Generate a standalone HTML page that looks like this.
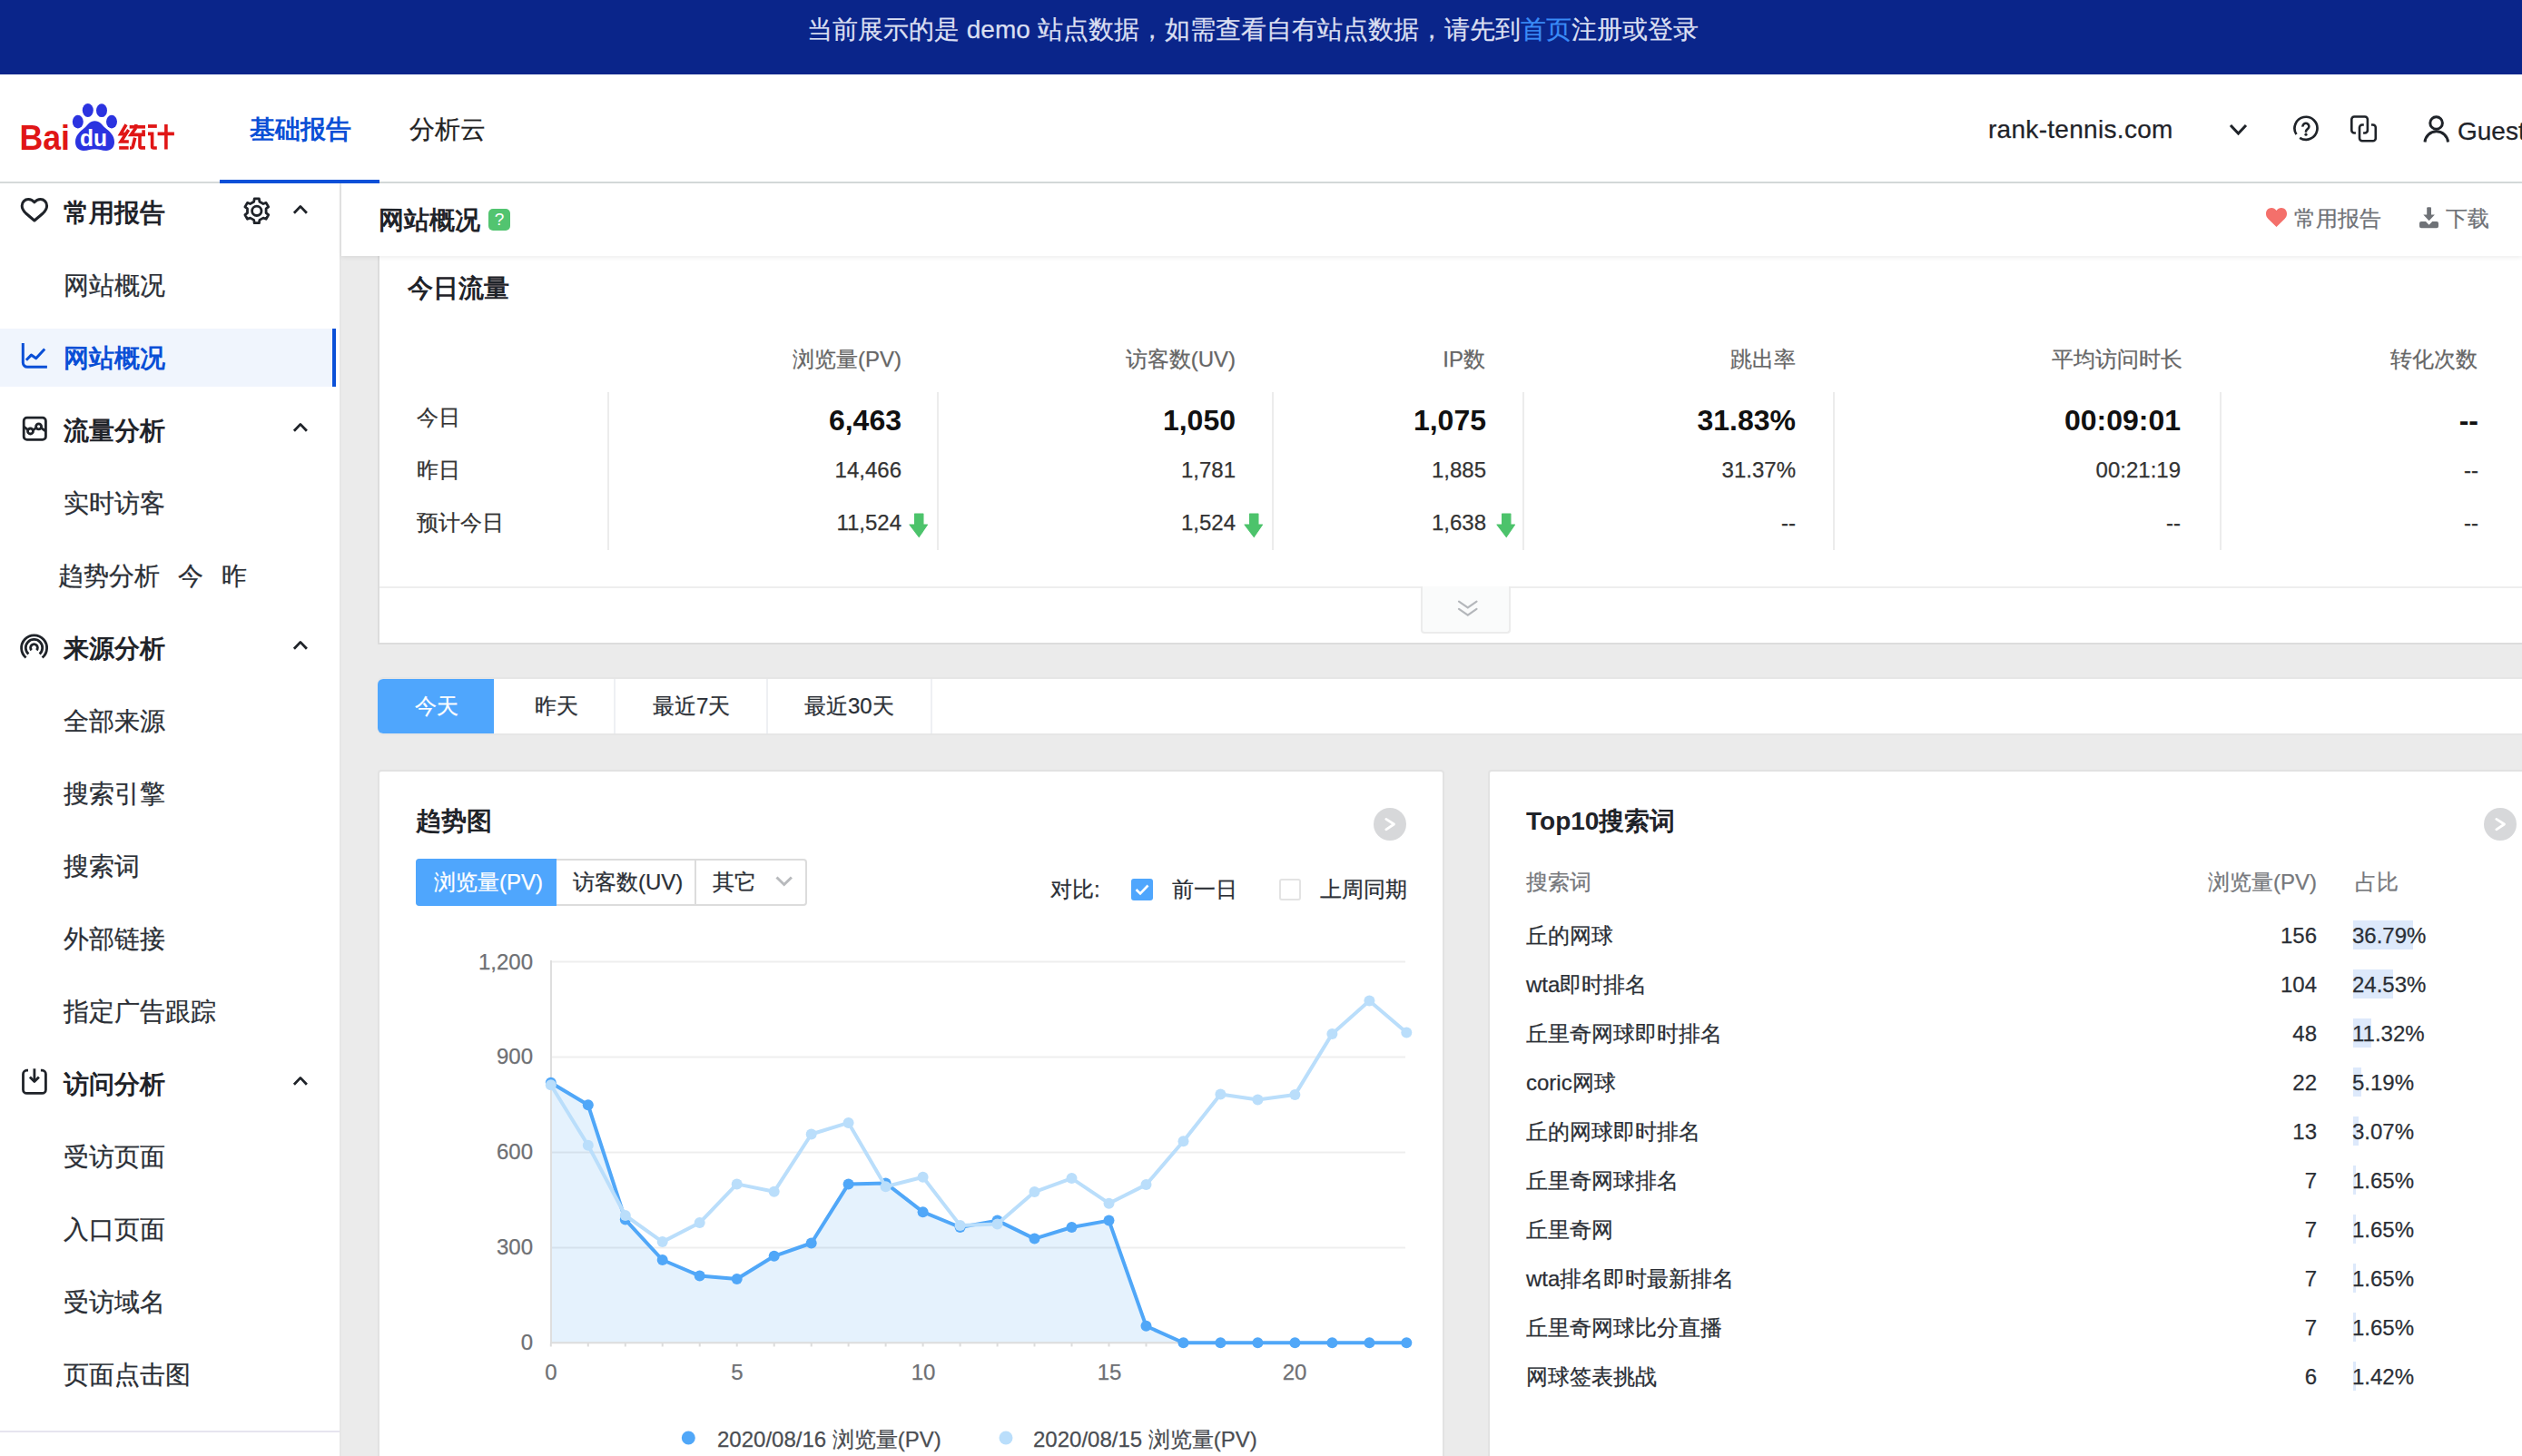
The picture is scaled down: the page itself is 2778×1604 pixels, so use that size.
<!DOCTYPE html>
<html><head><meta charset="utf-8">
<style>
*{margin:0;padding:0;box-sizing:border-box}
html,body{width:2778px;height:1604px;overflow:hidden;background:#ebebeb;font-family:"Liberation Sans",sans-serif;color:#222}
.a{position:absolute}
.t{position:absolute;white-space:nowrap;line-height:1;-webkit-text-stroke:0.25px currentColor}
.t[style*="bold"]{-webkit-text-stroke:0}
#banner{left:0;top:0;width:2778px;height:82px;background:#0a258a}
#header{left:0;top:82px;width:2778px;height:120px;background:#fff;border-bottom:2px solid #d5dada}
#side{left:0;top:202px;width:376px;height:1402px;background:#fff;border-right:2px solid #e6e6e6}
#titlebar{left:376px;top:202px;width:2402px;height:80px;background:#fff;box-shadow:0 2px 5px rgba(0,0,0,0.07);z-index:3}
.card{position:absolute;background:#fff;border:2px solid #e4e4e4}
.sb{font-size:28px;font-weight:bold;color:#2b2f36}
.si{font-size:28px;color:#2b2f36}
.th{font-size:24px;color:#666}
.vd{position:absolute;width:2px;background:#eeeeee;top:431px;height:175px}
</style></head><body>
<div id="banner" class="a"></div>
<div class="t" style="left:889px;top:19px;font-size:28px;color:#dadff1">当前展示的是 demo 站点数据，如需查看自有站点数据，请先到<span style="color:#3a8cf7">首页</span>注册或登录</div>

<div id="header" class="a"></div>
<svg class="a" style="left:0;top:100px" width="210" height="80" viewBox="0 100 210 80">
<text x="21.5" y="164.8" font-family="Liberation Sans" font-weight="bold" font-size="38.5" fill="#e01616" textLength="55.5" lengthAdjust="spacingAndGlyphs">Bai</text>
<g fill="#2b33e0">
<ellipse cx="96.8" cy="121.5" rx="6" ry="7.4"/><ellipse cx="112" cy="121.7" rx="6" ry="7.4"/>
<ellipse cx="85.8" cy="134.1" rx="6" ry="7.3"/><ellipse cx="123" cy="134.1" rx="6" ry="7.3"/>
<path d="M104.4 133.2C99 133.2 96.5 137.5 93.5 140.5C88 145 83 149 83 156.5C83 162.5 87 166 92 166C97 166 100 164.3 104.4 164.3C109 164.3 112 166 117 166C122 166 126 162.5 126 156.5C126 149 121 145 115.5 140.5C112.5 137.5 110 133.2 104.4 133.2Z"/>
</g>
<text x="88" y="161" font-family="Liberation Sans" font-weight="bold" font-size="25" fill="#fff" textLength="30" lengthAdjust="spacingAndGlyphs">du</text>
<g fill="none" stroke="#e01616" stroke-width="3.6" stroke-linejoin="miter" stroke-linecap="butt">
<path d="M139 137.3 L132.8 147.6 H138.2"/>
<path d="M141.6 143 L133.2 156 H141.8"/>
<path d="M131.2 162.9 H141.6"/>
<path d="M142.7 139.8 H160"/>
<path d="M149.8 137 V139"/>
<path d="M149.8 140.8 L144.3 148.4 H160 M158.1 143.2 V149"/>
<path d="M148.7 151.8 L146.3 161.5 Q145.8 163 144 163 H143"/>
<path d="M154 149.8 V161 Q154 162.9 156 162.9 H160"/>
<path d="M163 139 H172.8" stroke-width="3.8"/>
<path d="M163 147.4 H167.6 V161.5 Q167.6 163 169.5 163 H172.8"/>
<path d="M182.9 137.1 V164.6 M173.6 147.4 H191.9"/>
</g>
</svg>
<div class="t" style="left:275px;top:129px;font-size:28px;font-weight:bold;color:#0a4fd6">基础报告</div>
<div class="t" style="left:451px;top:129px;font-size:28px;color:#222">分析云</div>
<div class="a" style="left:242px;top:198px;width:176px;height:4px;background:#0a50d8;z-index:5"></div>
<div class="t" style="left:2190px;top:129px;font-size:28px;letter-spacing:0.3px;color:#1f2329">rank-tennis.com</div>
<svg class="a" style="left:2440px;top:110px" width="338" height="65" viewBox="2440 110 338 65" fill="none" stroke="#1f2329" stroke-width="3">
<path d="M2457 138 L2465.5 147 L2474 138"/>
<path d="M2529.5 148.1 A12.5 12.5 0 1 1 2533.2 151.8" stroke-width="2.7"/>
<path d="M2536.5 139.6 A3.45 3.45 0 1 1 2542.2 141.8 L2540.9 142.9 Q2540 143.8 2540 145 V145.8" stroke-width="2.6"/>
<circle cx="2540" cy="148.2" r="1.6" fill="#1f2329" stroke="none"/>
<path d="M2594.9 146.5 H2593.3 A3 3 0 0 1 2590.3 143.5 V131.5 A3 3 0 0 1 2593.3 128.5 H2604.9 A3 3 0 0 1 2607.9 131.5 V143.5 A3 3 0 0 1 2604.9 146.5 H2603.1" stroke-width="2.6"/>
<path d="M2603.8 137.5 H2602 A3 3 0 0 0 2599 140.5 V152.2 A3 3 0 0 0 2602 155.2 H2613.8 A3 3 0 0 0 2616.8 152.2 V140.5 A3 3 0 0 0 2613.8 137.5 H2612" stroke-width="2.6"/>
<circle cx="2683.6" cy="135.5" r="6.8"/>
<path d="M2671 156.5 A12.8 12.8 0 0 1 2696.5 156.5"/>
</svg>
<div class="t" style="left:2707px;top:131px;font-size:28px;color:#1f2329">Guest</div>
<div id="side" class="a"></div>
<div class="a" style="left:0;top:362px;width:365px;height:64px;background:#f0f5fd"></div>
<div class="a" style="left:366px;top:362px;width:4px;height:64px;background:#0a50d8"></div>
<div class="t" style="left:70px;top:221px;font-size:28px;font-weight:bold;color:#1f2329">常用报告</div>
<div class="t" style="left:70px;top:301px;font-size:28px;font-weight:normal;color:#2b2f36">网站概况</div>
<div class="t" style="left:70px;top:381px;font-size:28px;font-weight:bold;color:#0a4fd6">网站概况</div>
<div class="t" style="left:70px;top:461px;font-size:28px;font-weight:bold;color:#1f2329">流量分析</div>
<div class="t" style="left:70px;top:541px;font-size:28px;font-weight:normal;color:#2b2f36">实时访客</div>
<div class="t" style="left:64px;top:621px;font-size:28px;color:#2b2f36">趋势分析</div><div class="t" style="left:196px;top:621px;font-size:28px;color:#2b2f36">今</div><div class="t" style="left:244px;top:621px;font-size:28px;color:#2b2f36">昨</div>
<div class="t" style="left:70px;top:701px;font-size:28px;font-weight:bold;color:#1f2329">来源分析</div>
<div class="t" style="left:70px;top:781px;font-size:28px;font-weight:normal;color:#2b2f36">全部来源</div>
<div class="t" style="left:70px;top:861px;font-size:28px;font-weight:normal;color:#2b2f36">搜索引擎</div>
<div class="t" style="left:70px;top:941px;font-size:28px;font-weight:normal;color:#2b2f36">搜索词</div>
<div class="t" style="left:70px;top:1021px;font-size:28px;font-weight:normal;color:#2b2f36">外部链接</div>
<div class="t" style="left:70px;top:1101px;font-size:28px;font-weight:normal;color:#2b2f36">指定广告跟踪</div>
<div class="t" style="left:70px;top:1181px;font-size:28px;font-weight:bold;color:#1f2329">访问分析</div>
<div class="t" style="left:70px;top:1261px;font-size:28px;font-weight:normal;color:#2b2f36">受访页面</div>
<div class="t" style="left:70px;top:1341px;font-size:28px;font-weight:normal;color:#2b2f36">入口页面</div>
<div class="t" style="left:70px;top:1421px;font-size:28px;font-weight:normal;color:#2b2f36">受访域名</div>
<div class="t" style="left:70px;top:1501px;font-size:28px;font-weight:normal;color:#2b2f36">页面点击图</div>
<div class="a" style="left:0;top:1576px;width:374px;height:2px;background:#e6e4ef"></div>
<svg class="a" style="left:0;top:202px" width="374" height="1402" viewBox="0 202 374 1402" fill="none" stroke="#1f2329" stroke-width="2.8" stroke-linejoin="round">
<path d="M37.9 243 L28.5 235 C25.5 232.2 24.2 229.5 24.2 226.8 C24.2 222.6 27.3 219.6 31.2 219.6 C34 219.6 36.3 221 37.9 222.9 C39.5 221 41.8 219.6 44.6 219.6 C48.5 219.6 51.6 222.6 51.6 226.8 C51.6 229.5 50.3 232.2 47.3 235 Z" stroke-width="3"/>
<path d="M279.7 222.2 L280.2 218.9 L285.4 218.9 L285.9 222.2 L290.0 224.5 L293.1 223.4 L295.7 227.9 L293.1 229.9 L293.1 234.7 L295.7 236.7 L293.1 241.2 L290.0 240.1 L285.9 242.4 L285.4 245.7 L280.2 245.7 L279.7 242.4 L275.6 240.1 L272.5 241.2 L269.9 236.7 L272.5 234.7 L272.5 229.9 L269.9 227.9 L272.5 223.4 L275.6 224.5Z" stroke-width="2.8"/>
<circle cx="282.8" cy="232.3" r="5.2"/>
<path d="M323.9 234.8 L330.9 227.4 L337.9 234.8"/>
<g stroke="#0a4fd6" stroke-width="3" stroke-linecap="butt"><path d="M25.3 378 V399.5 A4.8 4.8 0 0 0 30.1 404.3 H51.9"/><path d="M28.9 396.8 L34.4 391.1 L39.7 394.7 L49.2 384.4"/></g>
<rect x="26.2" y="460.2" width="24.2" height="24.2" rx="3.5"/>
<path d="M26.2 470 L30.6 473.3 M36.3 473.8 L39.9 471.3 M45.4 471.3 L50.4 475.1"/>
<circle cx="33.5" cy="475" r="3"/><circle cx="42.6" cy="469.8" r="3"/>
<path d="M323.9 474.8 L330.9 467.4 L337.9 474.8"/>
<path d="M28.6 724.5 A14 14 0 1 1 46.6 724.5"/>
<path d="M31.4 720.5 A9.2 9.2 0 1 1 43.6 720.5"/>
<path d="M34.7 716.3 A3.9 3.9 0 1 1 40.3 716.3"/>
<path d="M323.9 714.8 L330.9 707.4 L337.9 714.8"/>
<path d="M31 1179.2 H29.5 A4 4 0 0 0 25.5 1183.2 V1200.4 A4 4 0 0 0 29.5 1204.4 H46.4 A4 4 0 0 0 50.4 1200.4 V1183.2 A4 4 0 0 0 46.4 1179.2 H44.9"/>
<path d="M37.9 1177.3 V1191"/><path d="M32.9 1186.4 L37.9 1191.4 L42.9 1186.4"/>
<path d="M323.9 1194.8 L330.9 1187.4 L337.9 1194.8"/>
</svg>
<div id="titlebar" class="a"></div>
<div class="t" style="left:417px;top:229px;font-size:28px;font-weight:bold;color:#1f2329;z-index:4">网站概况</div>
<div class="a" style="left:538px;top:230px;width:24px;height:24px;border-radius:5px;background:#52c470;z-index:4;color:#fff;font-size:19px;line-height:24px;text-align:center;font-family:'Liberation Sans',sans-serif">?</div>
<svg class="a" style="left:2490px;top:220px;z-index:4" width="210" height="40" viewBox="2490 220 210 40">
<path d="M2507.5 250 L2498.3 241 C2496.5 239.2 2496 237.5 2496 235.3 C2496 231.8 2498.6 229 2502 229 C2504.3 229 2506.2 230.3 2507.5 232 C2508.8 230.3 2510.7 229 2513 229 C2516.4 229 2519 231.8 2519 235.3 C2519 237.5 2518.5 239.2 2516.7 241 Z" fill="#f4706b"/>
<g fill="#6f7277"><rect x="2673.2" y="228.3" width="4.8" height="10" rx="1"/><path d="M2669.3 236.5 H2681.9 L2675.6 243.2 Z"/>
<path d="M2665 246 A2 2 0 0 1 2667 244 H2672 L2675.6 247.8 L2679.2 244 H2684 A2 2 0 0 1 2686 246 V249.2 A2 2 0 0 1 2684 251.2 H2667 A2 2 0 0 1 2665 249.2 Z"/></g>
</svg>
<div class="t" style="left:2527px;top:229px;font-size:24px;color:#6f7277;z-index:4">常用报告</div>
<div class="t" style="left:2694px;top:229px;font-size:24px;color:#6f7277;z-index:4">下载</div>
<div class="a" style="left:416px;top:270px;width:2400px;height:440px;background:#fff;border:2px solid #dcdcdc"></div>
<div class="a" style="left:418px;top:646px;width:2400px;height:2px;background:#eeeeee"></div>
<div class="t" style="left:449px;top:304px;font-size:28px;font-weight:bold;color:#1f2329">今日流量</div>
<div class="t" style="right:1785px;top:384px;font-size:24px;color:#666">浏览量(PV)</div>
<div class="t" style="right:1417px;top:384px;font-size:24px;color:#666">访客数(UV)</div>
<div class="t" style="right:1142px;top:384px;font-size:24px;color:#666">IP数</div>
<div class="t" style="right:800px;top:384px;font-size:24px;color:#666">跳出率</div>
<div class="t" style="right:374px;top:384px;font-size:24px;color:#666">平均访问时长</div>
<div class="t" style="right:49px;top:384px;font-size:24px;color:#666">转化次数</div>
<div class="t" style="left:459px;top:448px;font-size:24px;color:#333">今日</div>
<div class="t" style="left:459px;top:506px;font-size:24px;color:#333">昨日</div>
<div class="t" style="left:459px;top:564px;font-size:24px;color:#333">预计今日</div>
<div class="t" style="right:1785px;top:447px;font-size:32px;font-weight:bold;color:#111">6,463</div>
<div class="t" style="right:1785px;top:506px;font-size:24px;color:#333">14,466</div>
<div class="t" style="right:1785px;top:564px;font-size:24px;color:#333">11,524</div>
<div class="t" style="right:1417px;top:447px;font-size:32px;font-weight:bold;color:#111">1,050</div>
<div class="t" style="right:1417px;top:506px;font-size:24px;color:#333">1,781</div>
<div class="t" style="right:1417px;top:564px;font-size:24px;color:#333">1,524</div>
<div class="t" style="right:1141px;top:447px;font-size:32px;font-weight:bold;color:#111">1,075</div>
<div class="t" style="right:1141px;top:506px;font-size:24px;color:#333">1,885</div>
<div class="t" style="right:1141px;top:564px;font-size:24px;color:#333">1,638</div>
<div class="t" style="right:800px;top:447px;font-size:32px;font-weight:bold;color:#111">31.83%</div>
<div class="t" style="right:800px;top:506px;font-size:24px;color:#333">31.37%</div>
<div class="t" style="right:800px;top:564px;font-size:24px;color:#333">--</div>
<div class="t" style="right:376px;top:447px;font-size:32px;font-weight:bold;color:#111">00:09:01</div>
<div class="t" style="right:376px;top:506px;font-size:24px;color:#333">00:21:19</div>
<div class="t" style="right:376px;top:564px;font-size:24px;color:#333">--</div>
<div class="t" style="right:48px;top:447px;font-size:32px;font-weight:bold;color:#111">--</div>
<div class="t" style="right:48px;top:506px;font-size:24px;color:#333">--</div>
<div class="t" style="right:48px;top:564px;font-size:24px;color:#333">--</div>
<div class="a" style="left:669px;top:432px;width:2px;height:174px;background:#ececec"></div>
<div class="a" style="left:1032px;top:432px;width:2px;height:174px;background:#ececec"></div>
<div class="a" style="left:1401px;top:432px;width:2px;height:174px;background:#ececec"></div>
<div class="a" style="left:1677px;top:432px;width:2px;height:174px;background:#ececec"></div>
<div class="a" style="left:2019px;top:432px;width:2px;height:174px;background:#ececec"></div>
<div class="a" style="left:2445px;top:432px;width:2px;height:174px;background:#ececec"></div>
<svg class="a" style="left:0;top:0" width="2778" height="700" viewBox="0 0 2778 700"><g fill="#4cc36b" stroke="#4cc36b" stroke-width="1.2" stroke-linejoin="round"><path d="M1007.6 566 H1016.9 V578 H1021.5 L1012.25 591.5 L1002 578 H1007.6 Z"/><path d="M1376.6 566 H1385.9 V578 H1390.5 L1381.25 591.5 L1371 578 H1376.6 Z"/><path d="M1654.6 566 H1663.9 V578 H1668.5 L1659.25 591.5 L1649 578 H1654.6 Z"/></g></svg>
<div class="a" style="left:1565px;top:646px;width:99px;height:52px;background:#fafbfb;border:2px solid #ececec;border-top:none;border-radius:0 0 4px 4px"></div>
<svg class="a" style="left:1590px;top:650px" width="50" height="40" viewBox="1590 650 50 40" fill="none" stroke="#b4b7bb" stroke-width="2.2" stroke-linecap="round"><path d="M1607 662.7 L1616.8 669.5 L1626.5 662.7"/><path d="M1607 670.9 L1616.8 677.7 L1626.5 670.9"/></svg>
<div class="a" style="left:416px;top:746px;width:2400px;height:64px;background:#fff;border:2px solid #e6e6e6;border-radius:6px"></div>
<div class="a" style="left:416px;top:748px;width:128px;height:60px;background:#4fa6fd;border-radius:6px 0 0 6px"></div>
<div class="a" style="left:676px;top:748px;width:2px;height:60px;background:#eef0f3"></div>
<div class="a" style="left:844px;top:748px;width:2px;height:60px;background:#eef0f3"></div>
<div class="a" style="left:1025px;top:748px;width:2px;height:60px;background:#eef0f3"></div>
<div class="t" style="left:457px;top:766px;font-size:24px;color:#fff">今天</div>
<div class="t" style="left:589px;top:766px;font-size:24px;color:#2b2f36">昨天</div>
<div class="t" style="left:719px;top:766px;font-size:24px;color:#2b2f36">最近7天</div>
<div class="t" style="left:886px;top:766px;font-size:24px;color:#2b2f36">最近30天</div>
<div class="a" style="left:416px;top:848px;width:1175px;height:800px;background:#fff;border:2px solid #e2e2e2;border-radius:4px"></div>
<div class="a" style="left:1639px;top:848px;width:1200px;height:800px;background:#fff;border:2px solid #e2e2e2;border-radius:4px"></div>
<div class="t" style="left:458px;top:891px;font-size:28px;font-weight:bold;color:#1f2329">趋势图</div>
<div class="t" style="left:1681px;top:891px;font-size:28px;font-weight:bold;color:#1f2329">Top10搜索词</div>
<svg class="a" style="left:1512px;top:889px" width="38" height="38" viewBox="0 0 38 38"><circle cx="19" cy="19" r="18" fill="#d7d8da"/><path d="M14.8 13.4 L23.5 19 L14.8 24.8" fill="none" stroke="#fff" stroke-width="2.8" stroke-linecap="round" stroke-linejoin="round"/></svg>
<svg class="a" style="left:2735px;top:889px" width="38" height="38" viewBox="0 0 38 38"><circle cx="19" cy="19" r="18" fill="#d7d8da"/><path d="M14.8 13.4 L23.5 19 L14.8 24.8" fill="none" stroke="#fff" stroke-width="2.8" stroke-linecap="round" stroke-linejoin="round"/></svg>
<div class="a" style="left:458px;top:946px;width:431px;height:52px;background:#fff;border:2px solid #dcdcdc;border-radius:4px"></div>
<div class="a" style="left:458px;top:946px;width:155px;height:52px;background:#4fa6fd;border-radius:4px 0 0 4px"></div>
<div class="a" style="left:765px;top:948px;width:2px;height:48px;background:#dcdcdc"></div>
<div class="t" style="left:478px;top:960px;font-size:24px;color:#fff">浏览量(PV)</div>
<div class="t" style="left:631px;top:960px;font-size:24px;color:#2b2f36">访客数(UV)</div>
<div class="t" style="left:785px;top:960px;font-size:24px;color:#2b2f36">其它</div>
<svg class="a" style="left:850px;top:960px" width="30" height="24" viewBox="850 960 30 24"><path d="M855.5 966.5 L863.7 974.5 L871.9 966.5" fill="none" stroke="#b8babd" stroke-width="3"/></svg>
<div class="t" style="left:1157px;top:968px;font-size:24px;color:#2b2f36">对比:</div>
<div class="a" style="left:1246px;top:968px;width:24px;height:24px;background:#4fa6fd;border-radius:3px"></div>
<svg class="a" style="left:1246px;top:968px" width="24" height="24" viewBox="0 0 24 24"><path d="M5.5 12 L10 16.5 L18.5 7.5" fill="none" stroke="#fff" stroke-width="2.6"/></svg>
<div class="t" style="left:1291px;top:968px;font-size:24px;color:#2b2f36">前一日</div>
<div class="a" style="left:1409px;top:968px;width:24px;height:24px;background:#fff;border:2px solid #e3e3e3;border-radius:3px"></div>
<div class="t" style="left:1454px;top:968px;font-size:24px;color:#2b2f36">上周同期</div>
<svg class="a" style="left:418px;top:1000px" width="1170" height="604" viewBox="418 1000 1170 604">
<path d="M606.8 1479.3 L606.8 1192.8 L647.8 1217.3 L688.8 1343.6 L729.7 1388.0 L770.7 1405.5 L811.7 1409.0 L852.7 1383.8 L893.7 1369.5 L934.6 1304.4 L975.6 1303.4 L1016.6 1335.2 L1057.6 1352.0 L1098.6 1344.6 L1139.5 1364.6 L1180.5 1352.0 L1221.5 1344.6 L1262.5 1460.8 L1303.5 1479.3 L1344.4 1479.3 L1385.4 1479.3 L1426.4 1479.3 L1467.4 1479.3 L1508.4 1479.3 L1549.3 1479.3 L1549.3 1479.3 Z" fill="#e5f2fd"/>
<line x1="607" x2="1548" y1="1374.4" y2="1374.4" stroke="rgba(0,0,0,0.065)" stroke-width="2"/>
<line x1="607" x2="1548" y1="1269.4" y2="1269.4" stroke="rgba(0,0,0,0.065)" stroke-width="2"/>
<line x1="607" x2="1548" y1="1164.5" y2="1164.5" stroke="rgba(0,0,0,0.065)" stroke-width="2"/>
<line x1="607" x2="1548" y1="1059.5" y2="1059.5" stroke="rgba(0,0,0,0.065)" stroke-width="2"/>
<line x1="607" x2="607" y1="1058" y2="1480" stroke="#dedede" stroke-width="2"/>
<line x1="606" x2="1549" y1="1479.3" y2="1479.3" stroke="#dcdcdc" stroke-width="2"/>
<line x1="606.8" x2="606.8" y1="1480" y2="1483.5" stroke="#dcdcdc" stroke-width="2"/>
<line x1="647.8" x2="647.8" y1="1480" y2="1483.5" stroke="#dcdcdc" stroke-width="2"/>
<line x1="688.8" x2="688.8" y1="1480" y2="1483.5" stroke="#dcdcdc" stroke-width="2"/>
<line x1="729.7" x2="729.7" y1="1480" y2="1483.5" stroke="#dcdcdc" stroke-width="2"/>
<line x1="770.7" x2="770.7" y1="1480" y2="1483.5" stroke="#dcdcdc" stroke-width="2"/>
<line x1="811.7" x2="811.7" y1="1480" y2="1483.5" stroke="#dcdcdc" stroke-width="2"/>
<line x1="852.7" x2="852.7" y1="1480" y2="1483.5" stroke="#dcdcdc" stroke-width="2"/>
<line x1="893.7" x2="893.7" y1="1480" y2="1483.5" stroke="#dcdcdc" stroke-width="2"/>
<line x1="934.6" x2="934.6" y1="1480" y2="1483.5" stroke="#dcdcdc" stroke-width="2"/>
<line x1="975.6" x2="975.6" y1="1480" y2="1483.5" stroke="#dcdcdc" stroke-width="2"/>
<line x1="1016.6" x2="1016.6" y1="1480" y2="1483.5" stroke="#dcdcdc" stroke-width="2"/>
<line x1="1057.6" x2="1057.6" y1="1480" y2="1483.5" stroke="#dcdcdc" stroke-width="2"/>
<line x1="1098.6" x2="1098.6" y1="1480" y2="1483.5" stroke="#dcdcdc" stroke-width="2"/>
<line x1="1139.5" x2="1139.5" y1="1480" y2="1483.5" stroke="#dcdcdc" stroke-width="2"/>
<line x1="1180.5" x2="1180.5" y1="1480" y2="1483.5" stroke="#dcdcdc" stroke-width="2"/>
<line x1="1221.5" x2="1221.5" y1="1480" y2="1483.5" stroke="#dcdcdc" stroke-width="2"/>
<line x1="1262.5" x2="1262.5" y1="1480" y2="1483.5" stroke="#dcdcdc" stroke-width="2"/>
<line x1="1303.5" x2="1303.5" y1="1480" y2="1483.5" stroke="#dcdcdc" stroke-width="2"/>
<line x1="1344.4" x2="1344.4" y1="1480" y2="1483.5" stroke="#dcdcdc" stroke-width="2"/>
<line x1="1385.4" x2="1385.4" y1="1480" y2="1483.5" stroke="#dcdcdc" stroke-width="2"/>
<line x1="1426.4" x2="1426.4" y1="1480" y2="1483.5" stroke="#dcdcdc" stroke-width="2"/>
<line x1="1467.4" x2="1467.4" y1="1480" y2="1483.5" stroke="#dcdcdc" stroke-width="2"/>
<line x1="1508.4" x2="1508.4" y1="1480" y2="1483.5" stroke="#dcdcdc" stroke-width="2"/>
<line x1="1549.3" x2="1549.3" y1="1480" y2="1483.5" stroke="#dcdcdc" stroke-width="2"/>
<polyline points="606.8,1192.8 647.8,1217.3 688.8,1343.6 729.7,1388.0 770.7,1405.5 811.7,1409.0 852.7,1383.8 893.7,1369.5 934.6,1304.4 975.6,1303.4 1016.6,1335.2 1057.6,1352.0 1098.6,1344.6 1139.5,1364.6 1180.5,1352.0 1221.5,1344.6 1262.5,1460.8 1303.5,1479.3 1344.4,1479.3 1385.4,1479.3 1426.4,1479.3 1467.4,1479.3 1508.4,1479.3 1549.3,1479.3" fill="none" stroke="#50a7f8" stroke-width="4" stroke-linejoin="round"/>
<circle cx="606.8" cy="1192.8" r="6" fill="#50a7f8"/><circle cx="647.8" cy="1217.3" r="6" fill="#50a7f8"/><circle cx="688.8" cy="1343.6" r="6" fill="#50a7f8"/><circle cx="729.7" cy="1388.0" r="6" fill="#50a7f8"/><circle cx="770.7" cy="1405.5" r="6" fill="#50a7f8"/><circle cx="811.7" cy="1409.0" r="6" fill="#50a7f8"/><circle cx="852.7" cy="1383.8" r="6" fill="#50a7f8"/><circle cx="893.7" cy="1369.5" r="6" fill="#50a7f8"/><circle cx="934.6" cy="1304.4" r="6" fill="#50a7f8"/><circle cx="975.6" cy="1303.4" r="6" fill="#50a7f8"/><circle cx="1016.6" cy="1335.2" r="6" fill="#50a7f8"/><circle cx="1057.6" cy="1352.0" r="6" fill="#50a7f8"/><circle cx="1098.6" cy="1344.6" r="6" fill="#50a7f8"/><circle cx="1139.5" cy="1364.6" r="6" fill="#50a7f8"/><circle cx="1180.5" cy="1352.0" r="6" fill="#50a7f8"/><circle cx="1221.5" cy="1344.6" r="6" fill="#50a7f8"/><circle cx="1262.5" cy="1460.8" r="6" fill="#50a7f8"/><circle cx="1303.5" cy="1479.3" r="6" fill="#50a7f8"/><circle cx="1344.4" cy="1479.3" r="6" fill="#50a7f8"/><circle cx="1385.4" cy="1479.3" r="6" fill="#50a7f8"/><circle cx="1426.4" cy="1479.3" r="6" fill="#50a7f8"/><circle cx="1467.4" cy="1479.3" r="6" fill="#50a7f8"/><circle cx="1508.4" cy="1479.3" r="6" fill="#50a7f8"/><circle cx="1549.3" cy="1479.3" r="6" fill="#50a7f8"/>
<polyline points="606.8,1195.3 647.8,1261.7 688.8,1339.0 729.7,1368.1 770.7,1347.1 811.7,1304.4 852.7,1312.8 893.7,1249.5 934.6,1236.9 975.6,1307.2 1016.6,1296.7 1057.6,1349.9 1098.6,1348.5 1139.5,1313.1 1180.5,1298.1 1221.5,1325.7 1262.5,1305.1 1303.5,1257.2 1344.4,1205.4 1385.4,1211.4 1426.4,1206.1 1467.4,1138.9 1508.4,1102.6 1549.3,1137.5" fill="none" stroke="#badefb" stroke-width="4" stroke-linejoin="round"/>
<circle cx="606.8" cy="1195.3" r="6" fill="#badefb"/><circle cx="647.8" cy="1261.7" r="6" fill="#badefb"/><circle cx="688.8" cy="1339.0" r="6" fill="#badefb"/><circle cx="729.7" cy="1368.1" r="6" fill="#badefb"/><circle cx="770.7" cy="1347.1" r="6" fill="#badefb"/><circle cx="811.7" cy="1304.4" r="6" fill="#badefb"/><circle cx="852.7" cy="1312.8" r="6" fill="#badefb"/><circle cx="893.7" cy="1249.5" r="6" fill="#badefb"/><circle cx="934.6" cy="1236.9" r="6" fill="#badefb"/><circle cx="975.6" cy="1307.2" r="6" fill="#badefb"/><circle cx="1016.6" cy="1296.7" r="6" fill="#badefb"/><circle cx="1057.6" cy="1349.9" r="6" fill="#badefb"/><circle cx="1098.6" cy="1348.5" r="6" fill="#badefb"/><circle cx="1139.5" cy="1313.1" r="6" fill="#badefb"/><circle cx="1180.5" cy="1298.1" r="6" fill="#badefb"/><circle cx="1221.5" cy="1325.7" r="6" fill="#badefb"/><circle cx="1262.5" cy="1305.1" r="6" fill="#badefb"/><circle cx="1303.5" cy="1257.2" r="6" fill="#badefb"/><circle cx="1344.4" cy="1205.4" r="6" fill="#badefb"/><circle cx="1385.4" cy="1211.4" r="6" fill="#badefb"/><circle cx="1426.4" cy="1206.1" r="6" fill="#badefb"/><circle cx="1467.4" cy="1138.9" r="6" fill="#badefb"/><circle cx="1508.4" cy="1102.6" r="6" fill="#badefb"/><circle cx="1549.3" cy="1137.5" r="6" fill="#badefb"/>
<circle cx="758.3" cy="1584" r="7.5" fill="#50a7f8"/><circle cx="1108" cy="1584" r="7.5" fill="#badefb"/>
</svg>
<div class="t" style="right:2191px;top:1467px;font-size:24px;color:#6e7074">0</div>
<div class="t" style="right:2191px;top:1362px;font-size:24px;color:#6e7074">300</div>
<div class="t" style="right:2191px;top:1257px;font-size:24px;color:#6e7074">600</div>
<div class="t" style="right:2191px;top:1152px;font-size:24px;color:#6e7074">900</div>
<div class="t" style="right:2191px;top:1048px;font-size:24px;color:#6e7074">1,200</div>
<div class="t" style="left:567px;width:80px;text-align:center;top:1500px;font-size:24px;color:#6e7074">0</div>
<div class="t" style="left:772px;width:80px;text-align:center;top:1500px;font-size:24px;color:#6e7074">5</div>
<div class="t" style="left:977px;width:80px;text-align:center;top:1500px;font-size:24px;color:#6e7074">10</div>
<div class="t" style="left:1182px;width:80px;text-align:center;top:1500px;font-size:24px;color:#6e7074">15</div>
<div class="t" style="left:1386px;width:80px;text-align:center;top:1500px;font-size:24px;color:#6e7074">20</div>
<div class="t" style="left:790px;top:1574px;font-size:24px;color:#4a4d52">2020/08/16 浏览量(PV)</div>
<div class="t" style="left:1138px;top:1574px;font-size:24px;color:#4a4d52">2020/08/15 浏览量(PV)</div>
<div class="t" style="left:1681px;top:960px;font-size:24px;color:#76787c">搜索词</div>
<div class="t" style="right:226px;top:960px;font-size:24px;color:#76787c">浏览量(PV)</div>
<div class="t" style="left:2594px;top:960px;font-size:24px;color:#76787c">占比</div>
<div class="a" style="left:2592px;top:1014px;width:65.9px;height:32px;background:#dde9fb"></div>
<div class="t" style="left:1681px;top:1019px;font-size:24px;color:#2b2f36">丘的网球</div>
<div class="t" style="right:226px;top:1019px;font-size:24px;color:#2b2f36">156</div>
<div class="t" style="left:2591px;top:1019px;font-size:24px;color:#2b2f36">36.79%</div>
<div class="a" style="left:2592px;top:1068px;width:43.9px;height:32px;background:#dde9fb"></div>
<div class="t" style="left:1681px;top:1073px;font-size:24px;color:#2b2f36">wta即时排名</div>
<div class="t" style="right:226px;top:1073px;font-size:24px;color:#2b2f36">104</div>
<div class="t" style="left:2591px;top:1073px;font-size:24px;color:#2b2f36">24.53%</div>
<div class="a" style="left:2592px;top:1122px;width:20.3px;height:32px;background:#dde9fb"></div>
<div class="t" style="left:1681px;top:1127px;font-size:24px;color:#2b2f36">丘里奇网球即时排名</div>
<div class="t" style="right:226px;top:1127px;font-size:24px;color:#2b2f36">48</div>
<div class="t" style="left:2591px;top:1127px;font-size:24px;color:#2b2f36">11.32%</div>
<div class="a" style="left:2592px;top:1176px;width:9.3px;height:32px;background:#dde9fb"></div>
<div class="t" style="left:1681px;top:1181px;font-size:24px;color:#2b2f36">coric网球</div>
<div class="t" style="right:226px;top:1181px;font-size:24px;color:#2b2f36">22</div>
<div class="t" style="left:2591px;top:1181px;font-size:24px;color:#2b2f36">5.19%</div>
<div class="a" style="left:2592px;top:1230px;width:5.5px;height:32px;background:#dde9fb"></div>
<div class="t" style="left:1681px;top:1235px;font-size:24px;color:#2b2f36">丘的网球即时排名</div>
<div class="t" style="right:226px;top:1235px;font-size:24px;color:#2b2f36">13</div>
<div class="t" style="left:2591px;top:1235px;font-size:24px;color:#2b2f36">3.07%</div>
<div class="a" style="left:2592px;top:1284px;width:3.0px;height:32px;background:#dde9fb"></div>
<div class="t" style="left:1681px;top:1289px;font-size:24px;color:#2b2f36">丘里奇网球排名</div>
<div class="t" style="right:226px;top:1289px;font-size:24px;color:#2b2f36">7</div>
<div class="t" style="left:2591px;top:1289px;font-size:24px;color:#2b2f36">1.65%</div>
<div class="a" style="left:2592px;top:1338px;width:3.0px;height:32px;background:#dde9fb"></div>
<div class="t" style="left:1681px;top:1343px;font-size:24px;color:#2b2f36">丘里奇网</div>
<div class="t" style="right:226px;top:1343px;font-size:24px;color:#2b2f36">7</div>
<div class="t" style="left:2591px;top:1343px;font-size:24px;color:#2b2f36">1.65%</div>
<div class="a" style="left:2592px;top:1392px;width:3.0px;height:32px;background:#dde9fb"></div>
<div class="t" style="left:1681px;top:1397px;font-size:24px;color:#2b2f36">wta排名即时最新排名</div>
<div class="t" style="right:226px;top:1397px;font-size:24px;color:#2b2f36">7</div>
<div class="t" style="left:2591px;top:1397px;font-size:24px;color:#2b2f36">1.65%</div>
<div class="a" style="left:2592px;top:1446px;width:3.0px;height:32px;background:#dde9fb"></div>
<div class="t" style="left:1681px;top:1451px;font-size:24px;color:#2b2f36">丘里奇网球比分直播</div>
<div class="t" style="right:226px;top:1451px;font-size:24px;color:#2b2f36">7</div>
<div class="t" style="left:2591px;top:1451px;font-size:24px;color:#2b2f36">1.65%</div>
<div class="a" style="left:2592px;top:1500px;width:2.5px;height:32px;background:#dde9fb"></div>
<div class="t" style="left:1681px;top:1505px;font-size:24px;color:#2b2f36">网球签表挑战</div>
<div class="t" style="right:226px;top:1505px;font-size:24px;color:#2b2f36">6</div>
<div class="t" style="left:2591px;top:1505px;font-size:24px;color:#2b2f36">1.42%</div>
</body></html>
